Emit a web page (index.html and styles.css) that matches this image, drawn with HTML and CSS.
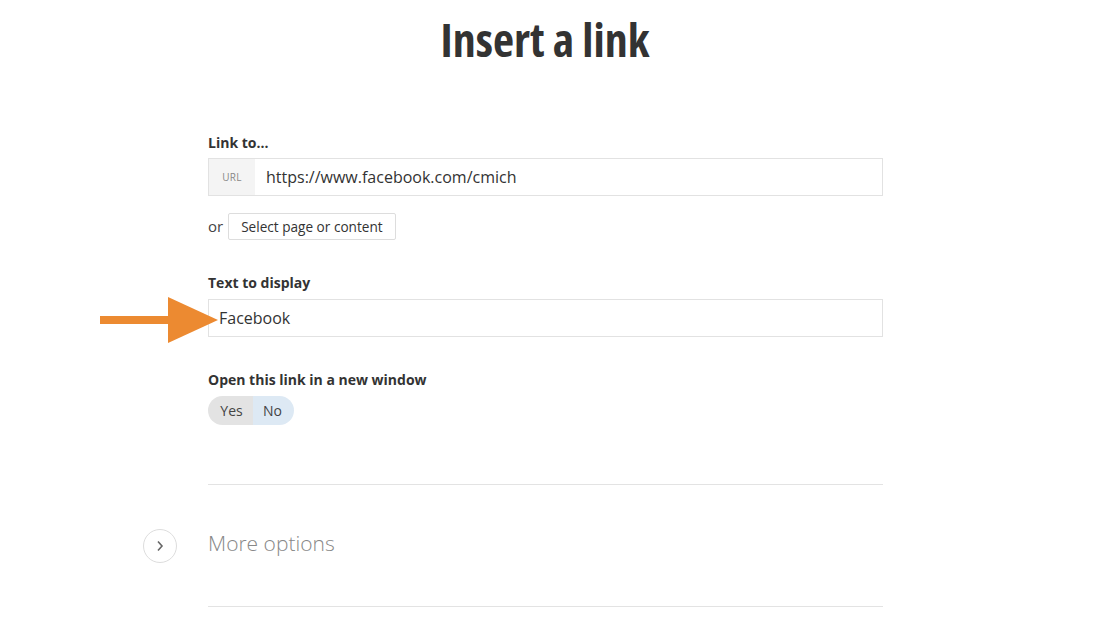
FILE: index.html
```html
<!DOCTYPE html>
<html lang="en">
<head>
<meta charset="utf-8">
<title>Insert a link</title>
<link rel="stylesheet" href="styles.css">
</head>
<body>
<h1 class="title">Insert a link</h1>
<div class="form">
  <div class="field">
    <label class="label">Link to...</label>
    <div class="input-group">
      <span class="addon">URL</span>
      <span class="input-text">https://www.facebook.com/cmich</span>
    </div>
    <div class="or-row">
      <span class="or">or</span>
      <button class="btn">Select page or content</button>
    </div>
  </div>
  <div class="field field-display">
    <label class="label">Text to display</label>
    <div class="input-box">
      <span class="input-text">Facebook</span>
      <svg class="arrow" width="120" height="48" viewBox="0 0 120 48">
        <rect x="0" y="19" width="70" height="8" fill="#ec8a31"/>
        <polygon points="68,0 118,23 68,46" fill="#ec8a31"/>
      </svg>
    </div>
  </div>
  <div class="field field-window">
    <label class="label">Open this link in a new window</label>
    <div class="toggle">
      <span class="seg seg-yes">Yes</span>
      <span class="seg seg-no">No</span>
    </div>
  </div>
  <hr class="rule rule-top">
  <div class="more">
    <span class="circle">
      <svg width="10" height="12" viewBox="0 0 10 12"><polyline points="3,1.5 7,6 3,10.5" fill="none" stroke="#666" stroke-width="1.6"/></svg>
    </span>
    <span class="more-text">More options</span>
  </div>
  <hr class="rule rule-bottom">
</div>
</body>
</html>
```
FILE: styles.css
```css
* { box-sizing: border-box; }
body {
  margin: 0;
  background: #fff;
  font-family: "Open Sans", "Liberation Sans", sans-serif;
  color: #333;
}
.title {
  margin: 0;
  padding-top: 11px;
  padding-right: 30px;
  height: 66px;
  line-height: 56px;
  text-align: center;
  font-size: 46px;
  font-weight: 700;
  font-stretch: 75%;
  color: #333;
}
.form {
  margin-left: 208px;
  width: 675px;
  padding-top: 67px;
}
.label {
  display: block;
  font-size: 14px;
  font-weight: 700;
  line-height: 20px;
  color: #333;
}
.input-group {
  margin-top: 5px;
  display: flex;
  height: 38px;
  border: 1px solid #e2e2e2;
}
.addon {
  width: 46px;
  background: #f4f4f4;
  display: flex;
  align-items: center;
  justify-content: center;
  font-size: 10px;
  color: #888;
  letter-spacing: 0.3px;
}
.input-text {
  display: flex;
  align-items: center;
  padding-left: 11px;
  font-size: 16px;
  color: #333;
}
.or-row {
  margin-top: 17px;
  display: flex;
  align-items: center;
  gap: 5px;
}
.or {
  font-size: 15px;
  color: #444;
  line-height: 20px;
  position: relative;
  top: -1px;
}
.btn {
  height: 27px;
  padding: 0 12px;
  border: 1px solid #ddd;
  border-radius: 2px;
  background: #fff;
  font-family: "Open Sans", "Liberation Sans", sans-serif;
  font-size: 13.6px;
  color: #333;
}
.field-display { margin-top: 33px; }
.input-box {
  position: relative;
  margin-top: 6px;
  height: 38px;
  border: 1px solid #e2e2e2;
  display: flex;
}
.input-box .input-text { padding-left: 10px; }
.arrow {
  position: absolute;
  left: -109px;
  top: -3px;
}
.field-window { margin-top: 33px; }
.toggle {
  margin-top: 6px;
  display: inline-flex;
  height: 29px;
  border-radius: 15px;
  overflow: hidden;
  font-size: 14px;
}
.seg {
  display: flex;
  align-items: center;
  justify-content: center;
  color: #444;
}
.seg-yes { width: 45px; background: #e3e3e3; padding-left: 2px; }
.seg-no { width: 41px; background: #dde9f4; padding-right: 2px; }
.rule {
  border: 0;
  margin: 0;
  height: 1px;
  background: #e3e3e3;
}
.rule-top { margin-top: 59px; }
.more {
  display: flex;
  align-items: center;
  height: 121px;
  margin-left: -65px;
}
.circle {
  width: 34px;
  height: 34px;
  border: 1px solid #ddd;
  border-radius: 50%;
  display: flex;
  align-items: center;
  justify-content: center;
  margin-right: 31px;
}
.more-text {
  font-size: 21px;
  font-weight: 300;
  color: #888;
  position: relative;
  top: -3px;
}
```
